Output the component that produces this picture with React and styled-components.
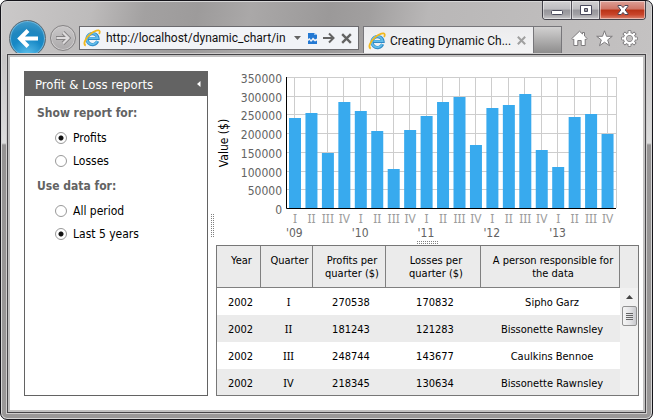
import React, { useState } from "react";
import styled, { createGlobalStyle } from "styled-components";

const Global = createGlobalStyle`
  *, *::before, *::after { box-sizing: border-box; }
  body { margin: 0; background: #fff; }
  button, input { font: inherit; color: inherit; }
  button { padding: 0; border: 0; background: none; }
  svg { display: block; }
`;

const ui = `"Roboto", "Liberation Sans", sans-serif`;
const tahoma = `"DejaVu Sans Condensed", "DejaVu Sans", sans-serif`;
const roman = `"Noto Sans", sans-serif`;

const BrowserWindow = styled.div`
  height: 100vh;
  display: flex;
  flex-direction: column;
  padding: 0 6px 6px 6px;
  border: 1px solid #15141a;
  border-radius: 7px;
  box-shadow: inset 0 0 0 1px #d6d6d6;
  background:
    linear-gradient(100deg, #cbc9c9 0, #bdbbbb 14%, #a3a1a1 22%, #9d9b9b 30%, #aaa8a8 38%, #9b9999 50%, #a19f9f 56%, #b9b7b7 65%, #c4c2c2 100%) top / 100% 54px no-repeat,
    linear-gradient(#c6c4c4 54px, #dcdcdc 142px, #959393 144px, #9a9898 100%);
`;

const Chrome = styled.header`
  height: 52px;
  flex: none;
  display: flex;
  flex-direction: column;
  overflow: hidden;
`;

const CaptionButtons = styled.div`
  align-self: flex-end;
  display: flex;
  flex: none;
  height: 19px;
  border: 1px solid #44434b;
  border-top: 0;
  border-radius: 0 0 4px 4px;
  overflow: hidden;
`;

const CaptionButton = styled.button`
  width: ${(p) => (p.$close ? 46 : 28)}px;
  display: grid;
  place-items: center;
  box-shadow: inset 0 0 0 1px rgba(255, 255, 255, 0.45);
  background: ${(p) =>
    p.$close
      ? "linear-gradient(#dda097 0, #cf7566 45%, #b93216 50%, #c8442a 75%, #dc8470 100%)"
      : "linear-gradient(#d2d1d2 0, #bdbcbf 45%, #96959a 50%, #a2a1a5 75%, #c9c8cb 100%)"};
  & + & { border-left: 1px solid #55535b; }
`;

const NavBar = styled.div`
  flex: none;
  height: 37px;
  display: flex;
  align-items: flex-start;
  padding-left: 2px;
`;

const Back = styled.button`
  width: 37px;
  height: 37px;
  flex: none;
  display: grid;
  place-items: center;
  border: 1px solid #5f6b73;
  border-radius: 50%;
  box-shadow: inset 0 0 0 1px #6bb4da;
  background: radial-gradient(circle at 50% 100%, #62c3ed 0, #1688c6 45%, #2087bf 65%, #4fa4d0 100%);
`;

const Forward = styled.button`
  width: 26px;
  height: 26px;
  flex: none;
  margin: 5px 3px 0 4px;
  display: grid;
  place-items: center;
  border: 1px solid #858384;
  border-radius: 50%;
  box-shadow: inset 0 0 0 1px #cfcdce;
  background: linear-gradient(#c9c7c8, #acaaab);
`;

const AddressBar = styled.form`
  flex: 1;
  min-width: 0;
  max-width: 280px;
  height: 24px;
  margin: 6px 4px 0 0;
  display: flex;
  align-items: center;
  padding: 0 5px 0 3px;
  border: 1px solid #6b6a6e;
  background: #f1f3f7;
  gap: 5px;
`;

const AddressInput = styled.input`
  flex: 1;
  width: 0;
  min-width: 0;
  height: 20px;
  padding: 0;
  border: 0;
  outline: 0;
  background: none;
  font: 12px ${ui};
  color: #111;
`;

const Tool = styled.button`
  display: grid;
  place-items: center;
  flex: none;
`;

const Tab = styled.div`
  width: 171px;
  height: 28px;
  flex: none;
  margin-top: 6px;
  display: flex;
  align-items: center;
  gap: 4px;
  padding: 0 6px 0 4px;
  border: 1px solid #77767a;
  border-bottom: 0;
  background: linear-gradient(#ececee, #f4f4f5);
  font: 12px ${ui};
  color: #111;
`;

const TabTitle = styled.span`
  flex: 1;
  white-space: nowrap;
`;

const NewTab = styled.button`
  width: 28px;
  height: 28px;
  flex: none;
  margin-top: 6px;
  border: 1px solid #77767a;
  border-left: 0;
  border-bottom: 0;
  background: linear-gradient(#d2d1d1, #8b8a8a);
`;

const Commands = styled.div`
  flex: none;
  margin-left: auto;
  display: flex;
  gap: 8px;
  padding: 10px 8px 0 0;
`;

const Viewport = styled.main`
  flex: 1;
  min-height: 0;
  margin-top: 1px;
  border: 1px solid #454447;
  outline: 1px solid #cfcdcd;
  box-shadow: inset 0 0 0 2px #c2c1c1;
  background: #fff;
  display: flex;
  padding: 16px 6px 16px 16px;
  font: 11px/13px ${tahoma};
  color: #000;
`;

const Sidebar = styled.aside`
  width: 184px;
  flex: none;
  border: 1px solid #636363;
`;

const SidebarHeader = styled.h1`
  height: 24px;
  margin: 0;
  padding: 0 6px 0 10px;
  display: flex;
  align-items: center;
  justify-content: space-between;
  background: #636363;
  color: #fff;
  font: 13px ${tahoma};
`;

const Options = styled.form`
  padding: 4px 12px;
`;

const Group = styled.fieldset`
  margin: 0 0 1px;
  padding: 0;
  border: 0;
  min-width: 0;
`;

const Legend = styled.legend`
  padding: 0;
  font: bold 12px/26px ${tahoma};
  color: #636363;
`;

const Option = styled.label`
  display: flex;
  align-items: center;
  gap: 6px;
  height: 23px;
  padding-left: 18px;
  font: 12px ${tahoma};
`;

const Radio = styled.input`
  appearance: none;
  width: 12px;
  height: 12px;
  margin: 0;
  border: 1px solid #999;
  border-radius: 50%;
  background: #fff;
  &:checked { background: radial-gradient(circle, #111 0 2px, #fff 3px); }
`;

const Grip = styled.div`
  width: ${(p) => (p.$vertical ? 3 : 21)}px;
  height: ${(p) => (p.$vertical ? 23 : 3)}px;
  background:
    repeating-linear-gradient(0deg, transparent 0 1px, #fff 1px 2px),
    repeating-linear-gradient(90deg, #808080 0 1px, #fff 1px 2px);
`;

const SideSplitter = styled.div`
  width: 8px;
  flex: none;
  display: grid;
  place-items: center;
  padding-bottom: 16px;
`;

const Report = styled.section`
  flex: 1;
  min-width: 0;
  display: flex;
  flex-direction: column;
`;

const ChartSvg = styled.svg`
  width: 100%;
  height: auto;
  flex: none;
`;

const AxisText = styled.text`
  font: 12px ${tahoma};
  fill: ${(p) => (p.$dark ? "#000" : "#636363")};
`;

const QuarterText = styled.text`
  font: 12px ${roman};
  fill: #9c9c9c;
`;

const RowSplitter = styled.div`
  height: 6px;
  flex: none;
  display: grid;
  place-items: center;
`;

const GridFrame = styled.div`
  flex: 1;
  min-height: 0;
  display: flex;
  overflow: hidden;
  border: 1px solid #777;
`;

const DataTable = styled.table`
  flex: 1;
  width: 0;
  align-self: flex-start;
  table-layout: fixed;
  border-collapse: separate;
  border-spacing: 0;
  text-align: center;
`;

const HeadCell = styled.th`
  width: ${(p) => (p.$width ? `${p.$width}px` : "auto")};
  height: 42px;
  padding: 8px 0 0 6px;
  vertical-align: top;
  font-weight: normal;
  white-space: pre-line;
  background: #ebebeb;
  border: 1px solid #808080;
  border-width: 0 1px 1px 0;
`;

const Row = styled.tr`
  &:nth-child(even) { background: #ebebeb; }
`;

const Cell = styled.td`
  height: 27px;
  padding: 7px 0 0 3px;
  vertical-align: baseline;
  ${(p) => p.$roman && `font-family: ${roman};`}
`;

const ScrollColumn = styled.div`
  width: 18px;
  flex: none;
  padding-top: 42px;
  background: linear-gradient(#ebebeb 42px, #f1f1f1 42px);
`;

const ScrollUp = styled.button`
  width: 100%;
  height: 18px;
  display: grid;
  place-items: center;
`;

const Thumb = styled.div`
  height: 20px;
  margin: 0 1px 0 2px;
  display: grid;
  place-items: center;
  border: 1px solid #929292;
  border-radius: 2px;
  background: linear-gradient(90deg, #f5f5f5, #e6e6e8 50%, #c8c9cd);
`;

const IeLogo = () => (
  <svg width="18" height="18" viewBox="0 0 18 18" fill="none" aria-hidden="true">
    <path d="M14.6 12.200A5.500 5.500 0 1 1 15 9.500H5.500" stroke="#2d88c4" strokeWidth="3.200" />
    <path d="M14.200 12.200A5.500 5.500 0 1 1 14.700 9.200H5.500" stroke="#62bdeb" strokeWidth="1.800" />
    <path d="M2.700 16.600C-.4 15 2.600 9.300 7 5.400C11.300 1.600 16.400.2 16.700 2.500c.1.8-.2 1.700-.6 2.500" stroke="#f0b81e" strokeWidth="1.800" />
  </svg>
);

const Cross = ({ color, size }) => (
  <svg width={size} height={size} viewBox="0 0 12 12" aria-hidden="true">
    <path d="M2 2l8 8M10 2l-8 8" stroke={color} strokeWidth="2.2" />
  </svg>
);

const values = [
  241000, 254000, 147000, 284000, 260000, 206000, 105000, 209000, 247000, 284000,
  297000, 169000, 268000, 276000, 305000, 156000, 110000, 242000, 250000, 199000,
];
const numerals = ["I", "II", "III", "IV"];
const years = ["'09", "'10", "'11", "'12", "'13"];
const levels = [350000, 300000, 250000, 200000, 150000, 100000, 50000, 0];

const LEFT = 70;
const BASE = 137;
const STEP = 16.45;
const toY = (v) => BASE - (v / 350000) * 131;

function Chart() {
  return (
    <ChartSvg viewBox="0 0 423 168" role="img" aria-label="Profits by quarter">
      <g stroke="#cdcdcd" shapeRendering="crispEdges">
        {levels.slice(0, -1).map((v) => (
          <line key={v} x1={LEFT} x2="400" y1={Math.round(toY(v)) + 0.5} y2={Math.round(toY(v)) + 0.5} />
        ))}
        {values.map((_, i) => {
          const x = Math.round(LEFT + 8 + i * STEP) + 0.5;
          return <line key={i} x1={x} x2={x} y1="6" y2={BASE} />;
        })}
        <line x1="400.5" x2="400.5" y1="6" y2={BASE} />
      </g>
      {values.map((v, i) => (
        <rect key={i} x={LEFT + 3 + i * STEP} y={Math.round(toY(v))} width="12" height={BASE - Math.round(toY(v))} fill="#38aaee" />
      ))}
      <path d={`M${LEFT + 0.5} 6V${BASE + 0.5}H400`} fill="none" stroke="#000" />
      {levels.map((v) => (
        <AxisText key={v} x="66" y={Math.round(toY(v)) + 6} textAnchor="end">{v}</AxisText>
      ))}
      {values.map((_, i) => (
        <QuarterText key={i} x={LEFT + 9 + i * STEP} y="152" textAnchor="middle">{numerals[i % 4]}</QuarterText>
      ))}
      {years.map((y, i) => (
        <AxisText key={y} x={LEFT + i * 4 * STEP} y="166">{y}</AxisText>
      ))}
      <AxisText $dark transform="translate(12 72) rotate(-90)" textAnchor="middle">Value ($)</AxisText>
    </ChartSvg>
  );
}

const columns = [
  ["Year", 44],
  ["Quarter", 52],
  ["Profits per\nquarter ($)", 73],
  ["Losses per\nquarter ($)", 95],
  ["A person responsible for the data"],
];
const rows = [
  ["2002", "I", "270538", "170832", "Sipho Garz"],
  ["2002", "II", "181243", "121283", "Bissonette Rawnsley"],
  ["2002", "III", "248744", "143677", "Caulkins Bennoe"],
  ["2002", "IV", "218345", "130634", "Bissonette Rawnsley"],
];

function OptionGroup({ title, name, options, initial }) {
  const [value, setValue] = useState(initial);
  return (
    <Group>
      <Legend>{title}</Legend>
      {options.map((o) => (
        <Option key={o}>
          <Radio type="radio" name={name} checked={value === o} onChange={() => setValue(o)} />
          {o}
        </Option>
      ))}
    </Group>
  );
}

const gearTeeth = [0, 45, 90, 135, 180, 225, 270, 315];

export default function App() {
  return (
    <>
      <Global />
      <BrowserWindow>
        <Chrome>
          <CaptionButtons>
            <CaptionButton aria-label="Minimize">
              <svg width="14" height="14"><rect x="1.5" y="7.5" width="11" height="4" rx="1" fill="#fff" stroke="#4a4a5c" /></svg>
            </CaptionButton>
            <CaptionButton aria-label="Maximize">
              <svg width="14" height="14"><path d="M1.5 2.5h11v9h-11zM5.5 5.5v3h3v-3z" fill="#fff" fillRule="evenodd" stroke="#4a4a5c" /></svg>
            </CaptionButton>
            <CaptionButton $close aria-label="Close">
              <svg width="14" height="14"><path d="M2 2.5h3.2L7 4.6 8.8 2.5H12v.8L9.2 7l2.8 3.7v.8H8.8L7 9.4l-1.8 2.1H2v-.8L4.8 7 2 3.3z" fill="#fff" stroke="#4b4555" /></svg>
            </CaptionButton>
          </CaptionButtons>
          <NavBar>
            <Back aria-label="Back">
              <svg width="21" height="19"><path d="M11 1.5L3 9.5l8 8M3.5 9.5H21" fill="none" stroke="#fff" strokeWidth="4" /></svg>
            </Back>
            <Forward aria-label="Forward">
              <svg width="16" height="14"><path d="M8 1.5L13.5 7 8 12.5M1 7h12" fill="none" stroke="#838182" strokeWidth="4" /><path d="M8 1.5L13.5 7 8 12.5M1.5 7H13" fill="none" stroke="#dedcdd" strokeWidth="2.2" /></svg>
            </Forward>
            <AddressBar onSubmit={(e) => e.preventDefault()}>
              <IeLogo />
              <AddressInput aria-label="Address" defaultValue="http://localhost/dynamic_chart/in" />
              <Tool type="button" aria-label="Show address history">
                <svg width="9" height="6"><path d="M1 1h7L4.500 5z" fill="#636363" /></svg>
              </Tool>
              <Tool type="button" aria-label="Compatibility view">
                <svg width="11" height="13" viewBox="0 0 11 13"><path d="M1 1h6l3 2v3.500L8 7.500 6 5.500 4 8 2.500 6 1 7zM1 9l1.500-1L4 10l2-2 2 1.500 2-1V12H1z" fill="#2479d3" /><path d="M7 1v2h3z" fill="#8fc0f0" /></svg>
              </Tool>
              <Tool type="submit" aria-label="Go">
                <svg width="12" height="12"><path d="M0 6h10M6 1.500L10.500 6 6 10.500" fill="none" stroke="#636363" strokeWidth="2" /></svg>
              </Tool>
              <Tool type="button" aria-label="Stop"><Cross color="#636363" size={13} /></Tool>
            </AddressBar>
            <Tab>
              <IeLogo />
              <TabTitle>Creating Dynamic Ch...</TabTitle>
              <Tool aria-label="Close tab"><Cross color="#a0a0a0" size={11} /></Tool>
            </Tab>
            <NewTab aria-label="New tab" />
            <Commands>
              <Tool aria-label="Home">
                <svg width="17" height="17" viewBox="0 0 17 17"><path d="M8.500 1.200L11.500 4V2.500h2V6l2.700 2.600-1.200 1.200-.8-.7v6.400h-4v-5H6.800v5h-4V9.100l-.8.7L.8 8.600z" fill="#fff" stroke="#7c7a7c" /></svg>
              </Tool>
              <Tool aria-label="Favorites">
                <svg width="17" height="17" viewBox="0 0 17 17"><path d="M8.500.8l2 5.500h5.800l-4.600 3.600 1.800 5.800-5-3.500-5 3.500 1.800-5.800L.7 6.300h5.800z" fill="#fff" stroke="#7c7a7c" /></svg>
              </Tool>
              <Tool aria-label="Tools">
                <svg width="17" height="17" viewBox="-8.500 -8.500 17 17">
                  {gearTeeth.map((a) => <path key={a} d="M-1.500-5L-1.300-7.800h2.600L1.500-5z" transform={`rotate(${a})`} fill="#fff" stroke="#7c7a7c" />)}
                  <circle r="4.500" fill="none" stroke="#7c7a7c" strokeWidth="3.600" />
                  <circle r="4.500" fill="none" stroke="#fff" strokeWidth="2.200" />
                  {gearTeeth.map((a) => <path key={a} d="M-1-4.500L-.9-7.300h1.800L1-4.500z" transform={`rotate(${a})`} fill="#fff" />)}
                </svg>
              </Tool>
            </Commands>
          </NavBar>
        </Chrome>
        <Viewport>
          <Sidebar>
            <SidebarHeader>
              Profit &amp; Loss reports
              <Tool aria-label="Collapse panel">
                <svg width="5" height="8"><path d="M4.500 1v6L1 4z" fill="#fff" /></svg>
              </Tool>
            </SidebarHeader>
            <Options>
              <OptionGroup title="Show report for:" name="kind" options={["Profits", "Losses"]} initial="Profits" />
              <OptionGroup title="Use data for:" name="period" options={["All period", "Last 5 years"]} initial="Last 5 years" />
            </Options>
          </Sidebar>
          <SideSplitter><Grip $vertical /></SideSplitter>
          <Report>
            <Chart />
            <RowSplitter><Grip /></RowSplitter>
            <GridFrame>
              <DataTable>
                <thead>
                  <tr>{columns.map(([label, width]) => <HeadCell key={label} $width={width}>{label}</HeadCell>)}</tr>
                </thead>
                <tbody>
                  {rows.map((r) => (
                    <Row key={r[1]}>{r.map((c, i) => <Cell key={i} $roman={i === 1}>{c}</Cell>)}</Row>
                  ))}
                </tbody>
              </DataTable>
              <ScrollColumn>
                <ScrollUp aria-label="Scroll up">
                  <svg width="7" height="4"><path d="M0 4L3.500 0 7 4z" fill="#444" /></svg>
                </ScrollUp>
                <Thumb>
                  <svg width="7" height="9"><path d="M0 1.500h7M0 3.500h7M0 5.500h7M0 7.500h7" stroke="#666" /></svg>
                </Thumb>
              </ScrollColumn>
            </GridFrame>
          </Report>
        </Viewport>
      </BrowserWindow>
    </>
  );
}
